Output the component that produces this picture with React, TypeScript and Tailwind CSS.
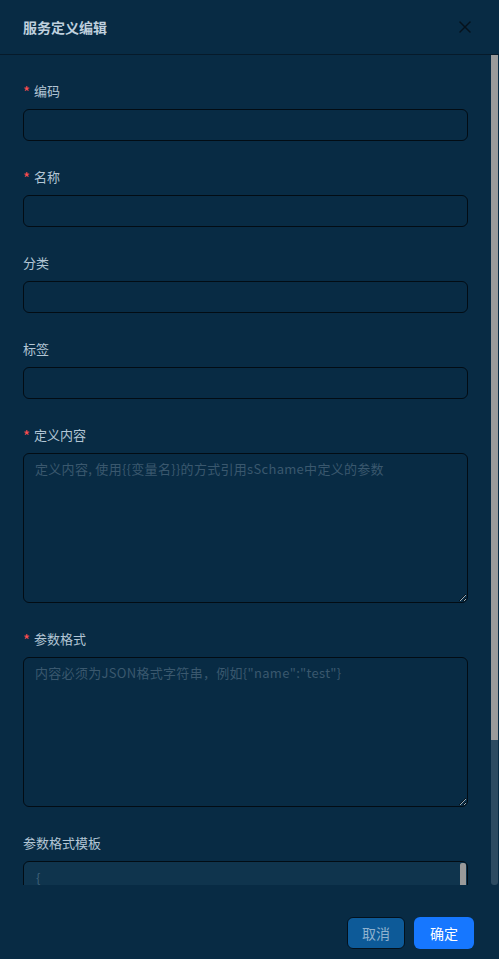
import { X } from 'lucide-react';

const font = { fontFamily: '"Noto Sans CJK SC", "Noto Sans", sans-serif' };

const Label = ({ text, required }: { text: string; required?: boolean }) => (
  <div className="flex items-center h-[20px] mb-[8px] text-[13px] text-[#b3c6d5]">
    {required && <span className="text-[#ff4d4f] mr-[4px] text-[15px] leading-none">*</span>}
    <span>{text}</span>
  </div>
);

const App = () => {
  const fields = [
    { label: '编码', required: true },
    { label: '名称', required: true },
    { label: '分类' },
    { label: '标签' },
  ];

  return (
    <div className="w-[499px] h-[959px] bg-[#082b44] flex flex-col overflow-hidden" style={font}>
      {/* header */}
      <div className="h-[55px] shrink-0 flex items-center justify-between pl-[23px] pr-[24px] border-b border-[#061a2a]">
        <span className="text-[14px] font-bold text-[#bfd0de]">服务定义编辑</span>
        <X size={20} strokeWidth={1.8} className="text-[#06121c]" />
      </div>

      {/* body */}
      <div className="h-[830px] shrink-0 flex">
        <div className="flex-1 overflow-hidden px-[23px] pt-[26px]">
          {fields.map((f) => (
            <div key={f.label} className="mb-[26px]">
              <Label text={f.label} required={f.required} />
              <input className="w-full h-[32px] rounded-[6px] border border-[#020c14] bg-[#082b44] outline-none" />
            </div>
          ))}

          <div className="mb-[26px]">
            <Label text="定义内容" required />
            <textarea
              className="block w-full h-[150px] rounded-[6px] border border-[#020c14] bg-[#082b44] px-[11px] py-[4px] text-[13px] leading-[22px] tracking-[0.3px] text-[#b3c6d5] placeholder:text-[#3a586e] outline-none resize-y"
              placeholder="定义内容, 使用{{变量名}}的方式引用sSchame中定义的参数"
            />
          </div>

          <div className="mb-[26px]">
            <Label text="参数格式" required />
            <textarea
              className="block w-full h-[150px] rounded-[6px] border border-[#020c14] bg-[#082b44] px-[11px] py-[4px] text-[13px] leading-[22px] tracking-[0.3px] text-[#b3c6d5] placeholder:text-[#3a586e] outline-none resize-y"
              placeholder={'内容必须为JSON格式字符串，例如{"name":"test"}'}
            />
          </div>

          <div>
            <Label text="参数格式模板" />
            <div className="relative h-[120px] rounded-[6px] border border-[#020c14] bg-[#0f344d] px-[12px] py-[6px] text-[13px] text-[#3f6178]">
              {'{'}
              <div className="absolute right-[1px] top-[1px] w-[6px] h-[60px] rounded-[2px] bg-[#9a9a9a]" />
            </div>
          </div>
        </div>

        {/* scrollbar */}
        <div className="w-[8px] shrink-0 flex flex-col pr-[1px]">
          <div className="h-[685px] bg-[#9b9b9b]" />
          <div className="flex-1 bg-[#2d4b61] rounded-b-[3px]" />
        </div>
      </div>

      {/* footer */}
      <div className="flex-1 flex items-start justify-end gap-[9px] pt-[32px] pr-[25px]">
        <button className="h-[32px] px-[14px] rounded-[6px] border border-[#03111c] bg-[#0d5a98] text-[14px] text-[#8fb2cf]">
          取消
        </button>
        <button className="h-[32px] px-[16px] rounded-[6px] bg-[#1677ff] text-[14px] text-white">
          确定
        </button>
      </div>
    </div>
  );
};

export default App;
